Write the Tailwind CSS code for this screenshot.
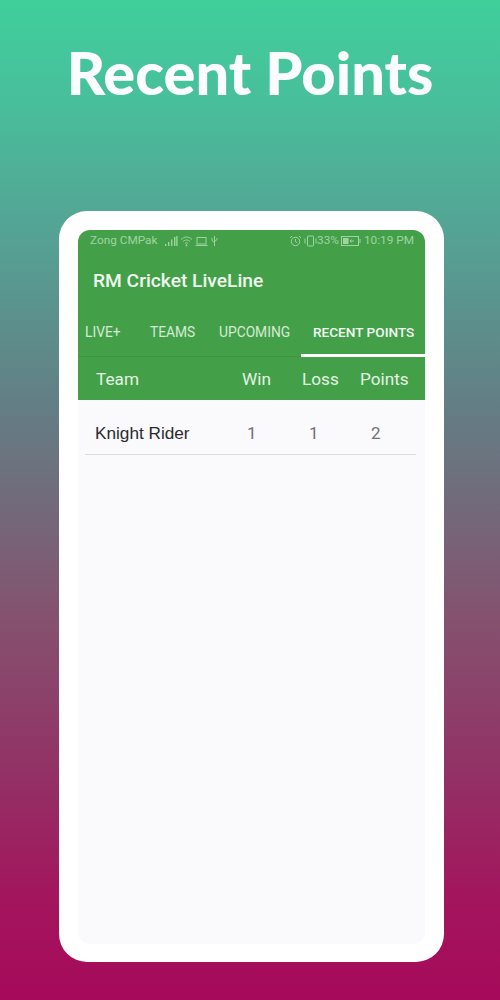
<!DOCTYPE html>
<html lang="en">
<head>
    <meta charset="UTF-8">
    <title>Recent Points</title>
    <script src="https://cdn.jsdelivr.net/npm/@tailwindcss/browser@4"></script>
</head>
<body class="w-[500px] h-[1000px] overflow-hidden font-['Roboto',sans-serif]">
    <div class="w-[500px] h-[1000px] flex flex-col items-center bg-[linear-gradient(180deg,#40cf9b_0%,#48bf9b_10%,#569f93_25%,#637f85_40%,#716b7b_50%,#85516f_62%,#913466_76%,#a3155d_90%,#a60a5a_100%)]">
        <!-- headline -->
        <h1 class="h-[211px] pt-[34px] font-['Lato',sans-serif] font-black text-[59.5px] leading-[76px] text-[#fbfdfc]">Recent Points</h1>

        <!-- phone frame -->
        <div class="ml-[3px] w-[385px] h-[751px] p-[19px] pb-[18px] bg-white rounded-[28px]">
            <div class="h-full flex flex-col bg-[#faf9fc] rounded-[12px] overflow-hidden">
                <div class="bg-[#43a049] text-white">
                    <!-- status bar -->
                    <div class="h-[22px] flex items-center justify-between pl-[12px] pr-[11px] text-[11.8px] text-[#9fd4a2] whitespace-nowrap">
                        <div class="flex items-center">
                            <span>Zong CMPak</span>
                            <svg class="ml-[7px]" width="13" height="12" viewBox="0 0 13 12" fill="#9fd4a2">
                                <rect x="0" y="9" width="1.4" height="2"/><rect x="3" y="7" width="1.4" height="4"/><rect x="6" y="4.5" width="1.4" height="6.5"/><rect x="9" y="2" width="1.4" height="9"/><rect x="11.2" y="1" width="1.4" height="10"/>
                            </svg>
                            <svg class="ml-[2px]" width="13" height="12" viewBox="0 0 13 12" fill="none" stroke="#9fd4a2" stroke-width="1">
                                <path d="M1 4.5C4.5 1.2 8.5 1.2 12 4.5M3 6.5C5.3 4.5 7.7 4.5 10 6.5M5 8.5C6 7.7 7 7.7 8 8.5"/><circle cx="6.5" cy="10.3" r=".6" fill="#9fd4a2"/>
                            </svg>
                            <svg class="ml-[2px]" width="13" height="12" viewBox="0 0 13 12" fill="none" stroke="#9fd4a2" stroke-width="1">
                                <rect x="2" y="2.5" width="9" height="6.5"/><path d="M.5 10.5h12"/>
                            </svg>
                            <svg class="ml-[3px]" width="7" height="12" viewBox="0 0 7 12" fill="none" stroke="#9fd4a2" stroke-width="1">
                                <path d="M3.5 1v10M1 3v2.5l2.5 2M6 3v1.5l-2.5 2"/>
                            </svg>
                        </div>
                        <div class="flex items-center">
                            <svg width="13" height="12" viewBox="0 0 13 12" fill="none" stroke="#9fd4a2" stroke-width="1">
                                <circle cx="6.5" cy="6.5" r="4.2"/><path d="M6.5 4v2.7l1.8 1M1 3l2-2M12 3l-2-2"/>
                            </svg>
                            <svg class="ml-[2px]" width="13" height="12" viewBox="0 0 13 12" fill="none" stroke="#9fd4a2" stroke-width="1">
                                <rect x="3.5" y="1" width="6" height="10" rx=".8"/><path d="M1 3.5v5M12 3.5v5"/>
                            </svg>
                            <span>33%</span>
                            <svg class="ml-[2px]" width="20" height="10" viewBox="0 0 20 10" fill="none" stroke="#9fd4a2" stroke-width="1">
                                <rect x=".5" y=".5" width="17" height="9"/><rect x="2" y="2" width="5.5" height="6" fill="#9fd4a2" stroke="none"/><path d="M13 5H9M10.5 3.5 9 5l1.5 1.5M19 3v4"/>
                            </svg>
                            <span class="ml-[3px]">10:19 PM</span>
                        </div>
                    </div>

                    <!-- toolbar -->
                    <div class="h-[58px] flex items-center pl-[15px] pt-[1px] text-[19.2px] font-medium text-[#f0f8f0]">RM Cricket LiveLine</div>

                    <!-- tabs -->
                    <div class="h-[47px] flex border-b border-[#3d9443] text-[13.8px] leading-[18px] text-[#d4ebd5] whitespace-nowrap">
                        <div class="w-[58px] pl-[7px] pt-[13px]">LIVE+</div>
                        <div class="w-[83px] pl-[14px] pt-[13px]">TEAMS</div>
                        <div class="w-[82px] pt-[13px]">UPCOMING</div>
                        <div class="flex-1 pl-[12px] pt-[13px] font-medium text-[13.6px] text-[#f4faf4] border-b-[3px] border-white h-[47px]">RECENT POINTS</div>
                    </div>

                    <!-- table header -->
                    <div class="h-[43px] flex items-center pt-[2px] text-[17.2px] text-[#e4f3e4]">
                        <div class="w-[164px] pl-[18px]">Team</div>
                        <div class="w-[60px]">Win</div>
                        <div class="w-[58px]">Loss</div>
                        <div>Points</div>
                    </div>
                </div>

                <!-- rows -->
                <div class="mx-[7px] mr-[9px] h-[55px] pt-[13px] flex items-center border-b border-[#dcdcde] text-[17px]">
                    <div class="w-[162px] pl-[10px] text-[#2a2a2c] font-['Liberation_Sans',sans-serif] text-[17.2px]">Knight Rider</div>
                    <div class="w-[62px] text-[#727274]">1</div>
                    <div class="w-[62px] text-[#727274]">1</div>
                    <div class="text-[#727274]">2</div>
                </div>
            </div>
        </div>
    </div>
</body>
</html>
